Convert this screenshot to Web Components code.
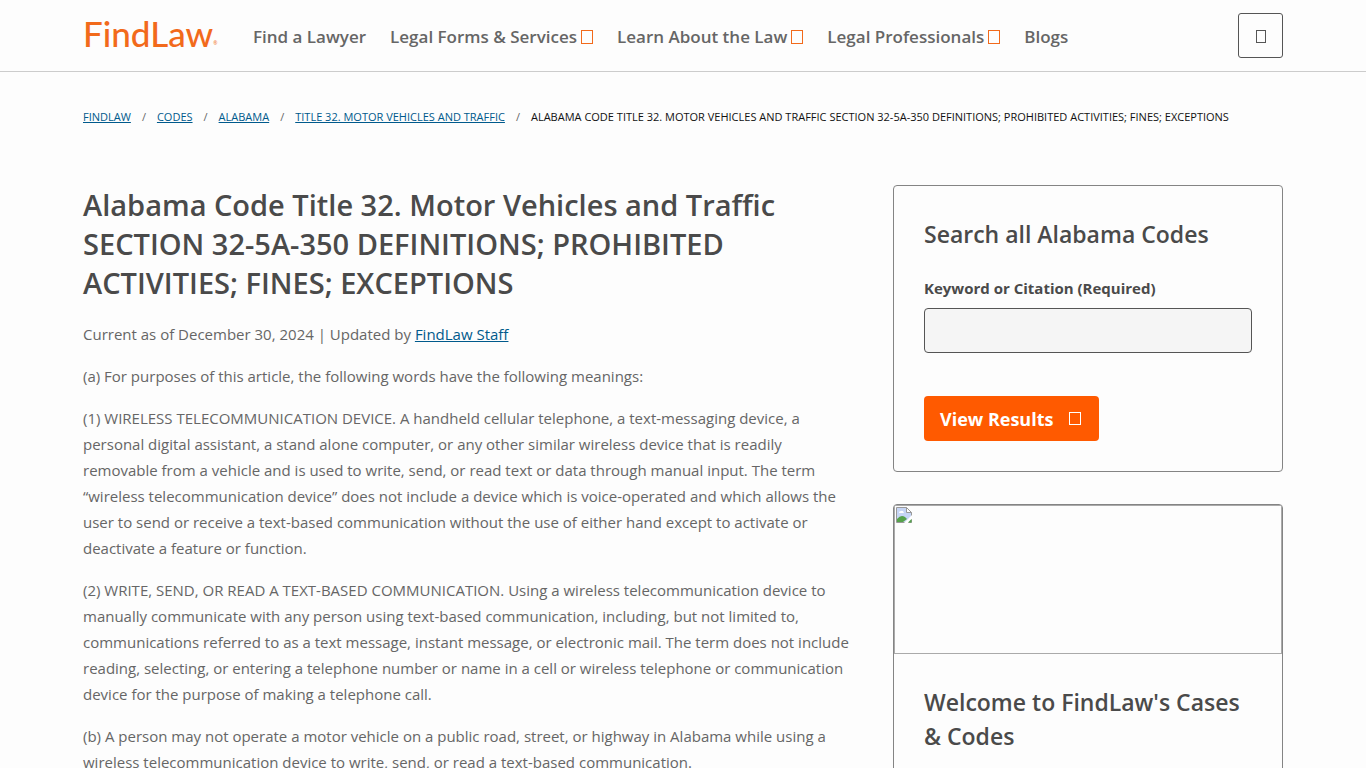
<!DOCTYPE html>
<html lang="en">
<head>
<meta charset="utf-8">
<meta name="viewport" content="width=device-width, initial-scale=1">
<title>Alabama Code Title 32 | FindLaw</title>
<style>
  :root { --ink: #4a4a4a; --body: #666; --brand: #ff5a00; --accent: #f26a1b; --link: #005a8c; --line: #848484; }
  body { margin: 0; background: #fdfdfd; color: var(--body); font: 15px/26px "Open Sans", "Noto Sans", sans-serif; }
</style>
</head>
<body>
<find-law-page></find-law-page>
<script>
const define = (name, html) => {
  const template = document.createElement("template");
  template.innerHTML = html;
  customElements.define(name, class extends HTMLElement {
    constructor() {
      super();
      this.attachShadow({ mode: "open" }).append(template.content.cloneNode(true));
    }
  });
};

define("icon-box", `
<style>
  :host { display: inline-block; box-sizing: border-box; width: 10px; height: 13px; border: 1px solid currentColor; flex: none; }
</style>`);

define("brand-logo", `
<style>
  :host { display: block; width: 130px; }
  a { display: flex; align-items: flex-end; padding-bottom: 6px; color: var(--accent); font: 500 35px/38px Lato, sans-serif; text-decoration: none; }
  small { font: 5px/18px "Open Sans", sans-serif; }
</style>
<a href="#">FindLaw<small>®</small></a>`);

define("nav-item", `
<style>
  :host { display: block; }
  a { display: flex; align-items: center; gap: 4px; color: var(--body); font-size: 17px; font-weight: 600; line-height: 26px; text-decoration: none; white-space: nowrap; }
  icon-box { display: none; color: var(--accent); width: 12px; height: 14px; }
  :host([menu]) icon-box { display: block; }
</style>
<a href="#"><slot></slot><icon-box></icon-box></a>`);

define("site-header", `
<style>
  :host { display: block; border-bottom: 1px solid #ccc; }
  .bar { display: flex; align-items: center; box-sizing: border-box; max-width: 1240px; margin: 0 auto; padding: 13px 20px; }
  nav { display: flex; gap: 24px; margin-left: 40px; padding-top: 2px; }
  button { display: grid; place-items: center; width: 45px; height: 45px; margin-left: auto; padding: 2px 0 0; border: 1px solid #555; border-radius: 3px; background: none; color: #555; }
</style>
<header class="bar">
  <brand-logo></brand-logo>
  <nav aria-label="Main">
    <nav-item>Find a Lawyer</nav-item>
    <nav-item menu>Legal Forms &amp; Services</nav-item>
    <nav-item menu>Learn About the Law</nav-item>
    <nav-item menu>Legal Professionals</nav-item>
    <nav-item>Blogs</nav-item>
  </nav>
  <button type="button" aria-label="Search"><icon-box></icon-box></button>
</header>`);

define("bread-crumbs", `
<style>
  :host { display: block; font-size: 11px; line-height: 18px; text-transform: uppercase; color: #111; }
  ol { display: flex; flex-wrap: wrap; margin: 0; padding: 0; list-style: none; }
  li + li::before { content: "/"; margin: 0 11px; color: #666; }
  a { color: var(--link); }
</style>
<nav aria-label="Breadcrumb"><ol>
  <li><a href="#">FindLaw</a></li>
  <li><a href="#">Codes</a></li>
  <li><a href="#">Alabama</a></li>
  <li><a href="#">Title 32. Motor Vehicles and Traffic</a></li>
  <li>Alabama Code Title 32. Motor Vehicles and Traffic Section 32-5A-350 Definitions; Prohibited Activities; Fines; Exceptions</li>
</ol></nav>`);

define("code-article", `
<style>
  :host { display: block; }
  h1 { margin: 0 0 19px; color: var(--ink); font-size: 29px; font-weight: 600; line-height: 39px; }
  p { margin: 0 0 16px; }
  a { color: var(--link); }
</style>
<article>
  <h1>Alabama Code Title 32. Motor Vehicles and Traffic SECTION 32-5A-350 DEFINITIONS; PROHIBITED ACTIVITIES; FINES; EXCEPTIONS</h1>
  <p>Current as of December 30, 2024 | Updated by <a href="#">FindLaw Staff</a></p>
  <p>(a) For purposes of this article, the following words have the following meanings:</p>
  <p>(1) WIRELESS TELECOMMUNICATION DEVICE. A handheld cellular telephone, a text-messaging device, a personal digital assistant, a stand alone computer, or any other similar wireless device that is readily removable from a vehicle and is used to write, send, or read text or data through manual input. The term “wireless telecommunication device” does not include a device which is voice-operated and which allows the user to send or receive a text-based communication without the use of either hand except to activate or deactivate a feature or function.</p>
  <p>(2) WRITE, SEND, OR READ A TEXT-BASED COMMUNICATION. Using a wireless telecommunication device to manually communicate with any person using text-based communication, including, but not limited to, communications referred to as a text message, instant message, or electronic mail. The term does not include reading, selecting, or entering a telephone number or name in a cell or wireless telephone or communication device for the purpose of making a telephone call.</p>
  <p>(b) A person may not operate a motor vehicle on a public road, street, or highway in Alabama while using a wireless telecommunication device to write, send, or read a text-based communication.</p>
</article>`);

define("side-card", `
<style>
  :host { display: block; border: 1px solid var(--line); border-radius: 4px; }
  .body { padding: 31px 30px 30px; }
  ::slotted(h2) { margin: 0; color: var(--ink); font-size: 23px; font-weight: 600; line-height: 34px; }
</style>
<slot name="media"></slot>
<div class="body"><slot name="title"></slot><slot></slot></div>`);

define("code-search", `
<style>
  :host { display: block; margin-top: 24px; }
  label { display: block; color: var(--ink); font-size: 15px; font-weight: 700; line-height: 26px; }
  input { display: block; box-sizing: border-box; width: 100%; height: 45px; margin: 7px 0 43px; padding: 0 12px; border: 1px solid #555; border-radius: 4px; background: #f5f5f5; font: inherit; }
  button { display: flex; align-items: center; gap: 16px; height: 45px; padding: 0 18px 0 16px; border: 0; border-radius: 4px; background: var(--brand); color: #fff; font: 700 18px/26px "Open Sans", sans-serif; }
  button icon-box { width: 12px; }
</style>
<form>
  <label for="keyword">Keyword or Citation (Required)</label>
  <input id="keyword" type="text" required>
  <button type="button">View Results<icon-box></icon-box></button>
</form>`);

define("missing-image", `
<style>
  :host { display: block; box-sizing: border-box; height: 149px; padding: 1px; border: 1px solid #aaa; }
  svg { display: block; }
</style>
<svg width="16" height="16" viewBox="0 0 16 16" aria-hidden="true">
  <path d="M.5.5h10l5 5v10H.5z" fill="#c6d5f5" stroke="#999"/>
  <path d="M10.500.5v5h5z" fill="#fff" stroke="#999"/>
  <path d="M3 6q0-2 2-2 2-1 3 2z" fill="#fff"/>
  <path d="M1 15v-3q4-5 8-2l2 2-4 3z" fill="#55a24b"/>
  <path d="M8 16 16 8v4l-4 4z" fill="#fff"/>
  <path d="M12 15.500h3.500V12z" fill="#55a24b"/>
</svg>`);

define("find-law-page", `
<style>
  :host { display: block; }
  .wrap { box-sizing: border-box; max-width: 1240px; margin: 0 auto; padding: 36px 20px 40px; }
  .columns { display: grid; grid-template-columns: minmax(0, 1fr) 390px; gap: 40px; margin-top: 59px; }
  aside { display: flex; flex-direction: column; gap: 32px; }
</style>
<site-header></site-header>
<div class="wrap">
  <bread-crumbs></bread-crumbs>
  <main class="columns">
    <code-article></code-article>
    <aside>
      <side-card><h2 slot="title">Search all Alabama Codes</h2><code-search></code-search></side-card>
      <side-card><missing-image slot="media"></missing-image><h2 slot="title">Welcome to FindLaw's Cases &amp; Codes</h2></side-card>
    </aside>
  </main>
</div>`);
</script>
</body>
</html>
